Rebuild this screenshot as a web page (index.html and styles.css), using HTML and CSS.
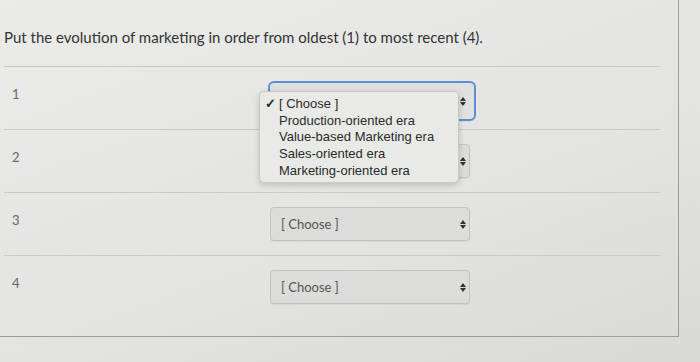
FILE: index.html
```html
<!DOCTYPE html>
<html>
<head>
<meta charset="utf-8">
<link rel="stylesheet" href="styles.css">
</head>
<body>
<div class="panel">
  <p class="question">Put the evolution of marketing in order from oldest (1) to most recent (4).</p>
  <div class="rows">
    <div class="row">
      <span class="num">1</span>
      <div class="select focused">
        <span class="label"></span>
        <span class="arrows"><i class="up"></i><i class="down"></i></span>
        <ul class="menu">
          <li><span class="check">✓</span>[ Choose ]</li>
          <li>Production-oriented era</li>
          <li>Value-based Marketing era</li>
          <li>Sales-oriented era</li>
          <li>Marketing-oriented era</li>
        </ul>
      </div>
    </div>
    <div class="row">
      <span class="num">2</span>
      <div class="select">
        <span class="label"></span>
        <span class="arrows"><i class="up"></i><i class="down"></i></span>
      </div>
    </div>
    <div class="row">
      <span class="num">3</span>
      <div class="select">
        <span class="label">[ Choose ]</span>
        <span class="arrows"><i class="up"></i><i class="down"></i></span>
      </div>
    </div>
    <div class="row last">
      <span class="num">4</span>
      <div class="select">
        <span class="label">[ Choose ]</span>
        <span class="arrows"><i class="up"></i><i class="down"></i></span>
      </div>
    </div>
  </div>
</div>
</body>
</html>
```
FILE: styles.css
```css
html, body {
  margin: 0;
  padding: 0;
}
body {
  width: 700px;
  height: 362px;
  background: linear-gradient(160deg, #ebecea 0%, #e3e4e2 60%, #d9dad8 100%);
  font-family: Lato, "Liberation Sans", sans-serif;
  color: #3b3b3b;
  overflow: hidden;
}
.panel {
  width: 679px;
  height: 337px;
  border-right: 1px solid #9c9d9b;
  border-bottom: 1px solid #9c9d9b;
  box-sizing: border-box;
  padding-top: 27px;
}
.question {
  margin: 0 0 0 4px;
  font-size: 15px;
  line-height: 20px;
  color: #333;
  height: 20px;
}
.rows {
  margin-top: 19px;
  margin-left: 4px;
  width: 656px;
  border-top: 1px solid #c9cac8;
}
.row {
  height: 63px;
  border-bottom: 1px solid #cacbc9;
  display: flex;
  align-items: flex-start;
  box-sizing: border-box;
}
.row.last {
  border-bottom: none;
}
.num {
  width: 266px;
  padding-left: 8px;
  padding-top: 19px;
  font-size: 13px;
  color: #666;
  box-sizing: border-box;
}
.select {
  position: relative;
  margin-top: 14px;
  width: 200px;
  height: 34px;
  box-sizing: border-box;
  border: 1px solid #c3c4c2;
  border-radius: 4px;
  background: #dcdddb;
  box-shadow: 0 1px 1px rgba(0,0,0,0.06);
  display: flex;
  align-items: center;
  justify-content: space-between;
  padding: 0 3px 0 10px;
}
.select.focused {
  width: 208px;
  height: 40px;
  margin-left: -2px;
  margin-top: 14px;
  border: 2px solid #5d8fd6;
  border-radius: 6px;
  background: #e0e1df;
  padding-right: 8px;
  z-index: 5;
}
.label {
  font-size: 13px;
  color: #555;
}
.arrows {
  display: flex;
  flex-direction: column;
  gap: 1px;
}
.arrows i {
  display: block;
  width: 0;
  height: 0;
  border-left: 3px solid transparent;
  border-right: 3px solid transparent;
}
.arrows .up {
  border-bottom: 4px solid #333;
}
.arrows .down {
  border-top: 4px solid #333;
}
.menu {
  position: absolute;
  left: -11px;
  top: 8px;
  width: 200px;
  margin: 0;
  padding: 4px 0 3px 0;
  list-style: none;
  background: #e9eae8;
  border: 1px solid #c8c9c7;
  border-radius: 5px;
  box-shadow: 0 2px 6px rgba(0,0,0,0.18);
  font-family: "Liberation Sans", Arial, sans-serif;
  font-size: 13px;
  color: #2a2a2a;
  box-sizing: border-box;
  z-index: 10;
}
.menu li {
  height: 16.7px;
  line-height: 16.7px;
  padding-left: 19px;
  position: relative;
  white-space: nowrap;
}
.check {
  position: absolute;
  left: 5px;
  font-weight: bold;
}
```
